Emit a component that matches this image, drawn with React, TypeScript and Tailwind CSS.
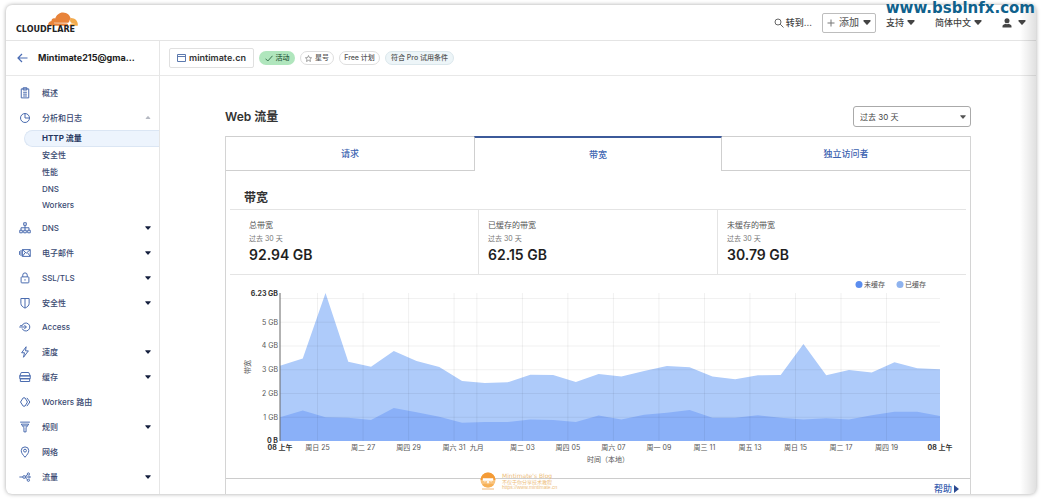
import React from "react";

type IconProps = { children: React.ReactNode };

function Icon({ children }: IconProps) {
  return (
    <svg viewBox="0 0 16 16" className="size-3 shrink-0" fill="none" stroke="#4668ad" strokeWidth="1.3" aria-hidden="true">
      {children}
    </svg>
  );
}

const icons = {
  overview: (
    <Icon>
      <path d="M3 2.5h10v12H3zM5.5 1h5v3h-5zM5.5 7h5M5.5 9.5h5M5.5 12h5" />
    </Icon>
  ),
  analytics: (
    <Icon>
      <circle cx="8" cy="8" r="6" />
      <path d="M8 2v6h6" />
    </Icon>
  ),
  dns: (
    <Icon>
      <path d="M6.3 1h3.4v3.4H6.3zM1 11h3.4v3.4H1zM6.3 11h3.4v3.4H6.3zM11.6 11H15v3.4h-3.4zM8 4.4V11M2.7 11V7.7h10.6V11" />
    </Icon>
  ),
  mail: (
    <Icon>
      <path d="M4.5 3.5H15v9H4.5zM4.5 3.5l5.2 4.7L15 3.5M4.5 12.5l3.8-5M15 12.5l-3.8-5M2.7 4v8M.8 5.5v5" />
    </Icon>
  ),
  lock: (
    <Icon>
      <rect x="2.8" y="6.5" width="10.4" height="8" rx="1" />
      <path d="M5 6.500V4.200a3 3 0 0 1 6 0v2.300M8 9.500v2" />
    </Icon>
  ),
  shield: (
    <Icon>
      <path d="M2.5 2h11v6.500c0 3-2.500 5-5.500 6.300-3-1.300-5.500-3.300-5.500-6.300zM8 2v12.500" />
    </Icon>
  ),
  access: (
    <Icon>
      <path d="M4.200 6a5.300 5.300 0 1 1 0 4M.3 8h9.500M7 5.200 9.800 8 7 10.800M1.500 6.200h3" />
    </Icon>
  ),
  speed: (
    <Icon>
      <path d="M9.500 1 3.500 9h3.800L6 15l6.500-8.500H8.700z" />
    </Icon>
  ),
  cache: (
    <Icon>
      <path d="M1 6.500 3 2h10l2 4.500zM1 6.500h14v3.800H1zM1.800 10.300h12.400V14H1.800z" />
    </Icon>
  ),
  workers: (
    <Icon>
      <path d="M5.500 2.500 2 8l3.500 5.500M5.500 2.500H8L11.300 8 8 13.500H5.500M10.500 2.500 14.500 8l-4 5.500" />
    </Icon>
  ),
  rules: (
    <Icon>
      <path d="M1.500 1.500h13M3 4.200h10L9.400 9v5.500H6.600V9zM5 6.500h6" />
    </Icon>
  ),
  network: (
    <Icon>
      <path d="M8 15C5 11.500 3 9 3 6.200a5 5 0 0 1 10 0C13 9 11 11.500 8 15z" />
      <circle cx="8" cy="6.200" r="1.900" />
    </Icon>
  ),
  traffic: (
    <Icon>
      <path d="M.5 8H5M8.400 7l2.800-2M8.600 8h4.200M8.400 9l2.800 2.500" />
      <circle cx="6.800" cy="8" r="1.800" />
      <circle cx="12.500" cy="4" r="1.500" />
      <circle cx="14" cy="8" r="1.100" />
      <circle cx="12.500" cy="12.300" r="1.500" />
    </Icon>
  ),
};

type NavItem = { label: string; icon: React.ReactNode; menu: boolean };

const navItems: NavItem[] = [
  { label: "DNS", icon: icons.dns, menu: true },
  { label: "电子邮件", icon: icons.mail, menu: true },
  { label: "SSL/TLS", icon: icons.lock, menu: true },
  { label: "安全性", icon: icons.shield, menu: true },
  { label: "Access", icon: icons.access, menu: false },
  { label: "速度", icon: icons.speed, menu: true },
  { label: "缓存", icon: icons.cache, menu: true },
  { label: "Workers 路由", icon: icons.workers, menu: false },
  { label: "规则", icon: icons.rules, menu: true },
  { label: "网络", icon: icons.network, menu: false },
  { label: "流量", icon: icons.traffic, menu: true },
];

const analyticsItems = ["安全性", "性能", "DNS", "Workers"];

function Caret({ className }: { className: string }) {
  return (
    <svg viewBox="0 0 10 6" className={className} fill="currentColor" aria-hidden="true">
      <path d="M1.300 0h7.400a.9.9 0 0 1 .7 1.500L5.700 5.600a.9.900 0 0 1-1.400 0L.6 1.500A.9.900 0 0 1 1.300 0z" />
    </svg>
  );
}

function NavRow({ item }: { item: NavItem }) {
  const inner = (
    <>
      {item.icon}
      <span className="ml-[11px] flex-1 text-left">{item.label}</span>
      {item.menu && <Caret className="h-1 w-1.5 text-[#16213f]" />}
    </>
  );
  return item.menu ? (
    <button type="button" className="flex h-6 w-full items-center pr-2 pl-[13px]">
      {inner}
    </button>
  ) : (
    <a href="#" className="flex h-6 w-full items-center pr-2 pl-[13px]">
      {inner}
    </a>
  );
}

function Sidebar() {
  return (
    <aside className="flex w-[154px] shrink-0 flex-col border-r border-[#e6e6e6]">
      <div className="flex h-[35px] shrink-0 items-center border-b border-[#e8e8e8] pl-[11px]">
        <a href="#" aria-label="返回">
          <svg viewBox="0 0 11 10" className="h-2.5 w-[11px]" fill="none" stroke="#4a6cb3" strokeWidth="1.200" aria-hidden="true">
            <path d="M10.500 5H1M5 1 1 5l4 4" />
          </svg>
        </a>
        <span className="ml-2.5 text-[9px] font-bold text-[#222]">Mintimate215@gma...</span>
      </div>
      <nav className="flex flex-1 flex-col justify-between pt-[5px] pb-[5px] text-[8px] font-medium text-[#3a4a72]">
        <NavRow item={{ label: "概述", icon: icons.overview, menu: false }} />
        <div className="h-[109px] shrink-0">
          <button type="button" className="flex h-6 w-full items-center pr-2 pl-[13px]">
            {icons.analytics}
            <span className="ml-[11px] flex-1 text-left">分析和日志</span>
            <Caret className="h-[3px] w-1.5 rotate-180 text-[#b5b9c2]" />
          </button>
          <ul className="flex h-[84px] flex-col">
            <li className="flex flex-1">
              <a
                href="#"
                aria-current="page"
                className="ml-[18px] flex flex-1 items-center rounded-l-full border border-r-0 border-[#dbe6f4] bg-[#edf4fd] pl-[17px] font-bold text-[#24365f]"
              >
                HTTP 流量
              </a>
            </li>
            {analyticsItems.map((label) => (
              <li key={label} className="flex flex-1">
                <a href="#" className="flex flex-1 items-center pl-9">
                  {label}
                </a>
              </li>
            ))}
          </ul>
        </div>
        {navItems.map((item) => (
          <NavRow key={item.label} item={item} />
        ))}
      </nav>
    </aside>
  );
}

function Header() {
  return (
    <header className="flex h-9 shrink-0 items-center border-b border-[#e4e4e4] pr-2.5 pl-2.5">
      <a href="#" className="flex flex-col items-end" aria-label="Cloudflare">
        <svg viewBox="0 0 30 14" className="-mr-[3px] h-3.5 w-[30px]" aria-hidden="true">
          <path
            d="M.2 13.700c-.4-2.600 1-4.400 3.300-4.700C3.300 6.800 5.500 5.600 7.200 6.600 8.500 2.600 11.600.3 15 .4c4 .1 6.900 2.500 7.700 6.100l-1.400 7.200z"
            fill="#e8833a"
          />
          <path d="M20.800 13.700 22.600 6c3.900-.3 7.100 2.700 7.200 6.300 0 .6 0 1-.1 1.400z" fill="#f3ab4c" />
          <path d="M6 10.700h13.500c1 0 1.600-.6 1.900-1.500l.4-1.800.6 2.300c.2.800.8 1.100 1.600 1.200l3.500.2-3.800.4c-1.200.2-1.900.9-2.300 2.200h-1.600c.5-1.500.1-2.100-1.300-2.200L6 11.300z" fill="#fff" />
        </svg>
        <span className="font-['DejaVu_Sans'] text-[8px] leading-[8px] font-bold text-[#222]">CLOUDFLARE</span>
      </a>
      <div className="ml-auto flex items-center text-[9px] font-medium text-[#444]">
        <button type="button" className="flex items-center gap-0.5">
          <svg viewBox="0 0 10 10" className="size-2.5" fill="none" stroke="#666" aria-hidden="true">
            <circle cx="4" cy="4" r="3" />
            <path d="m6.200 6.200 3.300 3.300" />
          </svg>
          转到...
        </button>
        <button type="button" className="ml-2.5 flex h-5 w-[54px] items-center justify-center gap-1 rounded-xs border border-[#bdbdbd] text-[10px] text-[#666]">
          <svg viewBox="0 0 8 8" className="size-2" stroke="#777" aria-hidden="true">
            <path d="M4 .5v7M.5 4h7" />
          </svg>
          添加
          <Caret className="h-[5px] w-2 text-[#444]" />
        </button>
        <button type="button" className="ml-2.5 flex items-center gap-[3px]">
          支持
          <Caret className="h-[5px] w-2" />
        </button>
        <button type="button" className="ml-5 flex items-center gap-[3px]">
          简体中文
          <Caret className="h-[5px] w-2" />
        </button>
        <button type="button" aria-label="帐户" className="ml-5 flex items-center gap-1.5">
          <svg viewBox="0 0 10 10" className="size-2.5" fill="#444" aria-hidden="true">
            <circle cx="5" cy="2.800" r="2.500" />
            <path d="M.5 9.500V8.300c0-1.300 1.500-2.100 3-2.500.9.600 2.100.6 3 0 1.500.4 3 1.200 3 2.500v1.200z" />
          </svg>
          <Caret className="h-[5px] w-2" />
        </button>
      </div>
    </header>
  );
}

function SiteBar() {
  return (
    <div className="flex h-[35px] shrink-0 items-center gap-[5px] border-b border-[#e8e8e8] pl-[9px] text-[7px] font-medium text-[#555]">
      <div className="flex h-5 w-[85px] items-center justify-center gap-[3px] rounded-xs border border-[#e0e0e0] text-[9px] font-semibold text-[#333]">
        <svg viewBox="0 0 9 8" className="h-2 w-[9px] shrink-0" fill="none" stroke="#5c79ae" aria-hidden="true">
          <path d="M.5.5h8v7h-8zM.5 2.500h8" />
        </svg>
        mintimate.cn
      </div>
      <span className="flex h-3.5 w-9 items-center justify-center gap-[3px] rounded-full bg-[#b0e6bd] text-[#2f5f42]">
        <svg viewBox="0 0 8 7" className="h-[7px] w-2" fill="none" stroke="#3a7650" aria-hidden="true">
          <path d="m.5 3.700 2.300 2.300L7.500.8" />
        </svg>
        活动
      </span>
      <button type="button" className="flex h-3.5 w-[34px] items-center justify-center gap-[3px] rounded-full border border-[#dedede]">
        <svg viewBox="0 0 10 10" className="size-[7px]" fill="none" stroke="#777" aria-hidden="true">
          <path d="m5 .8 1.300 2.900 3.100.3-2.300 2.100.7 3.100L5 7.600 2.200 9.200l.7-3.100L.6 4l3.100-.3z" />
        </svg>
        星号
      </button>
      <span className="flex h-3.5 w-[41px] items-center justify-center rounded-full border border-[#dedede]">Free 计划</span>
      <span className="flex h-3.5 w-[69px] items-center justify-center rounded-full border border-[#dbe7ec] bg-[#edf5f8]">符合 Pro 试用条件</span>
    </div>
  );
}

const totalSeries = [
  3.17, 3.47, 6.23, 3.34, 3.13, 3.79, 3.37, 3.12, 2.53, 2.44, 2.47, 2.79, 2.78, 2.48, 2.82, 2.71, 2.95, 3.16, 3.1, 2.72,
  2.6, 2.77, 2.78, 4.08, 2.77, 2.99, 2.88, 3.31, 3.06, 3.02,
];
const uncachedSeries = [
  1, 1.28, 1, 0.98, 0.88, 1.39, 1.21, 1.02, 0.77, 0.8, 0.8, 0.91, 0.88, 0.8, 1.07, 0.91, 1.11, 1.19, 1.31, 0.98, 0.98,
  1.08, 0.98, 0.9, 0.96, 0.91, 1.08, 1.23, 1.23, 1.05,
];
const plot = { left: 54, right: 714, top: 17, bottom: 165 };
const xAt = (day: number) => plot.left + (day * (plot.right - plot.left)) / 29;
const yAt = (gb: number) => plot.bottom - (gb * (plot.bottom - plot.top)) / 6.23;
const area = (values: number[]) =>
  `M${plot.left} ${plot.bottom}` + values.map((v, i) => `L${xAt(i)} ${yAt(v)}`).join("") + `L${plot.right} ${plot.bottom}Z`;

const ticks: [number, string][] = [
  [1.65, "周日 25"],
  [3.65, "周二 27"],
  [5.65, "周四 29"],
  [7.65, "周六 31"],
  [8.65, "九月"],
  [10.65, "周二 03"],
  [12.65, "周四 05"],
  [14.65, "周六 07"],
  [16.65, "周一 09"],
  [18.65, "周三 11"],
  [20.65, "周五 13"],
  [22.65, "周日 15"],
  [24.65, "周二 17"],
  [26.65, "周四 19"],
];

function BandwidthChart() {
  return (
    <svg viewBox="0 0 744 202" className="mt-px block w-full text-[7px]" fill="#555" role="img" aria-label="带宽">
      <g>
        <circle cx="633" cy="8.500" r="3.500" fill="#5b8def" />
        <text x="638" y="11">未缓存</text>
        <circle cx="674" cy="8.500" r="3.500" fill="#8fb3ee" />
        <text x="679" y="11">已缓存</text>
      </g>
      <path d={area(totalSeries)} fill="#aecbfa" />
      <path d={area(uncachedSeries)} fill="#8ab0f8" />
      <g stroke="#000" strokeOpacity="0.060">
        {[1, 2, 3, 4, 5, 6].map((gb) => (
          <path key={gb} d={`M${plot.left} ${yAt(gb)}H${plot.right}`} />
        ))}
        {ticks.map(([day]) => (
          <path key={day} d={`M${xAt(day)} ${plot.top}V${plot.bottom}`} />
        ))}
      </g>
      <path d={`M${plot.left} ${plot.top}V${plot.bottom}`} stroke="#666" />
      <g textAnchor="end">
        <text x="52" y="20" fontWeight="700" fill="#333">6.23 GB</text>
        {[1, 2, 3, 4, 5].map((gb) => (
          <text key={gb} x="52" y={yAt(gb) + 2.5}>{gb} GB</text>
        ))}
        <text x="52" y="167" fontWeight="700" fill="#333">0 B</text>
      </g>
      <g textAnchor="middle">
        <text x="54" y="174" fontWeight="700" fill="#333">08 上午</text>
        {ticks.map(([day, label]) => (
          <text key={day} x={xAt(day)} y="174">{label}</text>
        ))}
        <text x="714" y="174" fontWeight="700" fill="#333">08 上午</text>
        <text x="382" y="186">时间（本地）</text>
        <text transform="translate(24 91) rotate(-90)">带宽</text>
      </g>
    </svg>
  );
}

const stats = [
  { label: "总带宽", value: "92.94 GB" },
  { label: "已缓存的带宽", value: "62.15 GB" },
  { label: "未缓存的带宽", value: "30.79 GB" },
];

function TrafficPanel() {
  return (
    <section className="mx-auto w-full max-w-[746px]">
      <div className="flex items-center justify-between pt-[30px]">
        <h1 className="text-[12px] font-semibold text-[#333]">Web 流量</h1>
        <div className="relative">
          <select
            aria-label="时间范围"
            className="block h-[21px] w-[118px] appearance-none rounded-[3px] border border-[#aaa] bg-white pl-1.5 text-[8px] text-[#444]"
          >
            <option>过去 30 天</option>
          </select>
          <Caret className="pointer-events-none absolute top-[9px] right-[5px] h-1 w-1.5 text-[#555]" />
        </div>
      </div>
      <div className="mt-[9px] border-x border-[#d4d4d4]">
        <div role="tablist" className="grid h-[35px] grid-cols-3 text-[9px] font-medium text-[#3b62b0]">
          <button type="button" role="tab" aria-selected="false" className="border-y border-[#cfcfcf]">请求</button>
          <button type="button" role="tab" aria-selected="true" className="border-x border-t-2 border-x-[#cfcfcf] border-t-[#3c5a9a]">带宽</button>
          <button type="button" role="tab" aria-selected="false" className="border-y border-[#cfcfcf]">独立访问者</button>
        </div>
        <h2 className="pt-[17px] pl-[18px] text-[12px] leading-5 font-semibold text-[#333]">带宽</h2>
        <dl className="mx-1 mt-px grid grid-cols-[248fr_239fr_249fr] border-y border-[#e4e4e4]">
          {stats.map((stat, i) => (
            <div key={stat.label} className={i > 0 ? "h-16 border-l border-[#e4e4e4] pt-[9px] pl-[9px]" : "h-16 pt-[9px] pl-[19px]"}>
              <dt className="text-[8px] leading-[13px] text-[#555]">
                {stat.label}
                <span className="block text-[7px] text-[#777]">过去 30 天</span>
              </dt>
              <dd className="text-[14px] leading-5 font-semibold text-[#1f1f1f]">{stat.value}</dd>
            </div>
          ))}
        </dl>
        <BandwidthChart />
        <div className="flex h-8 justify-end border-t border-[#ccc] pt-[5px] pr-[11px]">
          <button type="button" className="flex h-2.5 items-center gap-0.5 text-[9px] leading-[10px] font-medium text-[#3b62b0]">
            帮助
            <svg viewBox="0 0 5 8" className="h-2 w-[5px]" fill="#2c4a91" aria-hidden="true">
              <path d="M0 0v8l5-4z" />
            </svg>
          </button>
        </div>
      </div>
    </section>
  );
}

function BlogMark() {
  return (
    <div className="absolute bottom-1 left-[474px] flex items-center gap-1.5 text-[#edbd7c]">
      <svg viewBox="0 0 16 18" className="h-[18px] w-4" aria-hidden="true">
        <circle cx="8" cy="8" r="7.500" fill="#f9c27a" />
        <path d="M.5 8a7.500 7.500 0 0 1 15 0z" fill="#f49b36" />
        <path d="M3 6.500h10v2H3zM4 10l2.500-1.500M12 10 9.500 8.500M7.300 9h1.400v2H7.300z" fill="#fff" stroke="#fff" strokeWidth=".5" />
        <path d="M2 12.500c2-1 4-1 6 0 2-1 4-1 6 0-1.200 2-3.400 3-6 3s-4.800-1-6-3z" fill="#f6b056" />
        <path d="M2 17h12" stroke="#f0b776" />
      </svg>
      <div className="text-[5px] leading-[6px]">
        <p className="font-['DejaVu_Sans'] text-[6px]">Mintimate's Blog</p>
        <p>不仅于你分享技术教程</p>
        <p className="font-['Liberation_Sans'] text-[5px] leading-[5px]">https://www.mintimate.cn</p>
      </div>
    </div>
  );
}

export default function App() {
  return (
    <div className="relative flex h-screen bg-white pt-[5px] pr-[5px] pb-1.5 pl-1.5 font-['Inter','Noto_Sans_CJK_SC',sans-serif]">
      <div className="relative flex min-w-0 flex-1 flex-col overflow-hidden rounded-md bg-white">
        <Header />
        <div className="flex min-h-0 flex-1">
          <Sidebar />
          <main className="min-w-0 flex-1">
            <SiteBar />
            <TrafficPanel />
          </main>
        </div>
        <BlogMark />
        <div className="pointer-events-none absolute inset-y-0 right-0 w-4 bg-linear-to-r from-transparent to-black/12" />
      </div>
      <div className="pointer-events-none absolute top-[5px] right-[5px] bottom-1.5 left-1.5 rounded-md shadow-[0_0_4px_rgba(0,0,0,0.35)]" />
      <p className="absolute top-0 right-1.5 font-['DejaVu_Sans'] text-[15px] leading-4 font-bold text-[#0f618c]">www.bsblnfx.com</p>
    </div>
  );
}
